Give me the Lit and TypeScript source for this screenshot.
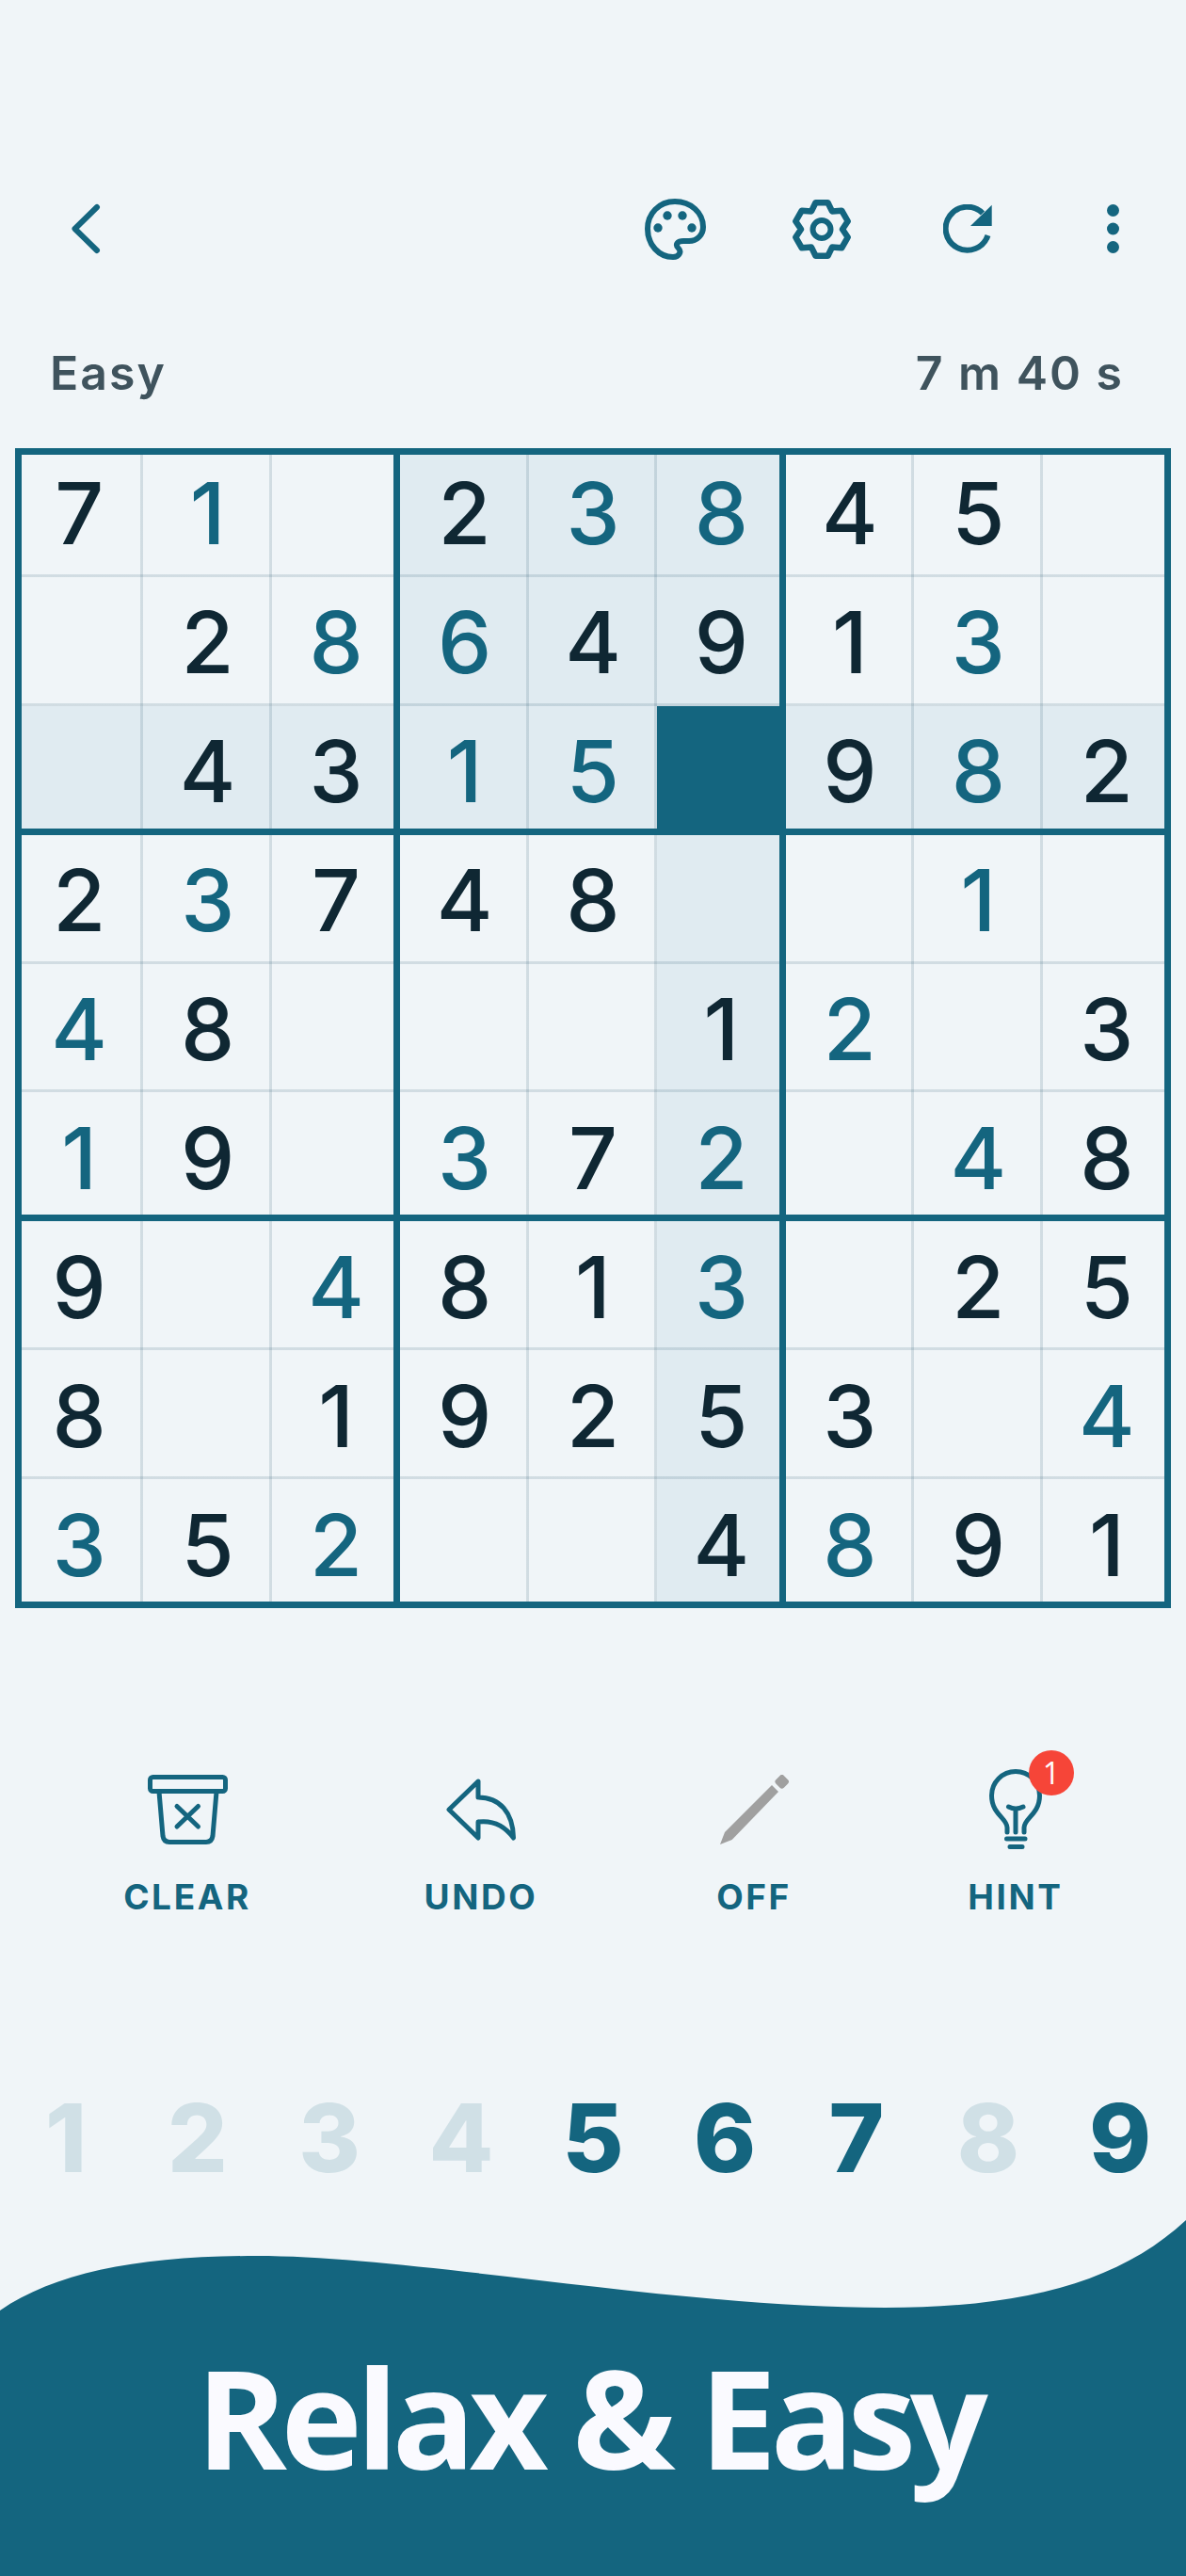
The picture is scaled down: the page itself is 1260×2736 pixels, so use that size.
import { LitElement, css, html, svg } from 'lit';
import { customElement } from 'lit/decorators.js';
import { classMap } from 'lit/directives/class-map.js';

// g = given digit (dark), u = digit filled in by the player (teal)
const BOARD = [
   ['7g', '1u', '', '2g', '3u', '8u', '4g', '5g', ''],
   ['', '2g', '8u', '6u', '4g', '9g', '1g', '3u', ''],
   ['', '4g', '3g', '1u', '5u', '', '9g', '8u', '2g'],
   ['2g', '3u', '7g', '4g', '8g', '', '', '1u', ''],
   ['4u', '8g', '', '', '', '1g', '2u', '', '3g'],
   ['1u', '9g', '', '3u', '7g', '2u', '', '4u', '8g'],
   ['9g', '', '4u', '8g', '1g', '3u', '', '2g', '5g'],
   ['8g', '', '1g', '9g', '2g', '5g', '3g', '', '4u'],
   ['3u', '5g', '2u', '', '', '4g', '8u', '9g', '1g'],
];
const SEL_ROW = 2;
const SEL_COL = 5;
const PAD_DONE = [true, true, true, true, false, false, false, true, false];

const icon = (w: number, h: number, body: unknown) => html`<svg
   width=${w}
   height=${h}
   viewBox="0 0 ${w} ${h}"
   fill="none"
   stroke="currentColor"
   stroke-linecap="round"
   stroke-linejoin="round"
>
   ${body}
</svg>`;

// six tooth gear outline around its centre
function gearPath(cx: number, cy: number, outer: number, valley: number) {
   const pt = (deg: number, r: number) => {
      const a = (deg * Math.PI) / 180;
      return `${(cx + r * Math.cos(a)).toFixed(1)} ${(cy + r * Math.sin(a)).toFixed(1)}`;
   };
   const parts: string[] = [];
   for (let k = 0; k < 6; k++) {
      const a = -90 + 60 * k;
      parts.push(pt(a - 13, outer), pt(a + 13, outer), pt(a + 30, valley));
   }
   return 'M' + parts.join('L') + 'Z';
}

@customElement('app-root')
export class AppRoot extends LitElement {
   static styles = css`
      :host {
         display: block;
         width: 1260px;
         height: 2736px;
         background: #f0f5f8;
         font-family: 'Inter', 'Liberation Sans', sans-serif;
         color: #14657f;
         overflow: hidden;
      }
      .page {
         display: flex;
         flex-direction: column;
         height: 100%;
      }

      .toolbar {
         display: flex;
         align-items: center;
         justify-content: space-between;
         height: 66px;
         margin-top: 210px;
         padding-left: 74px;
      }
      .toolbar svg {
         display: block;
      }
      .tools {
         display: grid;
         grid-template-columns: repeat(4, 155px);
         justify-items: center;
         align-items: center;
      }

      .status {
         display: flex;
         justify-content: space-between;
         margin-top: 91px;
         padding: 0 66px 0 53px;
         font-size: 50px;
         line-height: 58px;
         font-weight: 600;
         color: #3f535d;
         letter-spacing: 2px;
      }

      .board {
         display: grid;
         grid-template-columns: repeat(9, 1fr);
         grid-template-rows: repeat(9, 1fr);
         width: 1228px;
         height: 1232px;
         margin: 51px 0 0 16px;
      }
      .cell {
         --l: 0px;
         --t: 0px;
         --r: 0px;
         --b: 0px;
         display: flex;
         align-items: center;
         justify-content: center;
         box-sizing: border-box;
         padding-top: 3px;
         background-color: #f0f5f8;
         background-image: linear-gradient(rgba(20, 70, 95, 0.14), rgba(20, 70, 95, 0.14)),
            linear-gradient(rgba(20, 70, 95, 0.14), rgba(20, 70, 95, 0.14));
         background-size: 3px 100%, 100% 3px;
         background-position: right top, left bottom;
         background-repeat: no-repeat;
         box-shadow: inset var(--l) 0 0 #14657f, inset 0 var(--t) 0 #14657f,
            inset calc(var(--r) * -1) 0 0 #14657f,
            inset 0 calc(var(--b) * -1) 0 #14657f;
         font-size: 91px;
         font-weight: 500;
         line-height: 1;
         color: #0f2733;
      }
      .cell.first-col {
         --l: 7px;
      }
      .cell.first-row {
         --t: 7px;
      }
      .cell.box-right {
         --r: 7px;
      }
      .cell.box-bottom {
         --b: 7px;
      }
      .cell.user {
         color: #14657f;
      }
      .cell.peer {
         background-color: #e0ebf1;
      }
      .cell.sel {
         background-color: #14657f;
         background-image: none;
      }

      .actions {
         display: grid;
         grid-template-columns: 260px 364px 216px 340px;
         margin-top: 171px;
         padding-left: 69px;
      }
      .action {
         display: flex;
         flex-direction: column;
         align-items: center;
      }
      .glyph {
         position: relative;
         height: 86px;
         display: flex;
         align-items: center;
         justify-content: center;
      }
      .glyph svg {
         display: block;
      }
      .label {
         margin-top: 28px;
         font-size: 37px;
         line-height: 44px;
         font-weight: 700;
         letter-spacing: 2.6px;
      }
      .badge {
         position: absolute;
         top: -20px;
         left: 42px;
         width: 48px;
         height: 48px;
         border-radius: 50%;
         background: #f64538;
         color: #fff;
         font-family: 'Open Sans', sans-serif;
         font-size: 32px;
         line-height: 48px;
         text-align: center;
      }

      .pad {
         display: grid;
         grid-template-columns: repeat(9, 1fr);
         margin-top: 174px;
         font-size: 100px;
         line-height: 120px;
         font-weight: 800;
         text-align: center;
      }
      .pad span.done {
         color: #d0e0e6;
      }

      .banner {
         position: relative;
         height: 378px;
         margin-top: auto;
      }
      .banner svg {
         position: absolute;
         left: 0;
         top: 0;
         display: block;
      }
      .banner h1 {
         position: relative;
         margin: 0;
         padding: 109px 8px 0 0;
         font-family: 'Open Sans', sans-serif;
         font-size: 146px;
         line-height: 200px;
         font-weight: 700;
         letter-spacing: -6.3px;
         text-align: center;
         color: #fafaff;
      }
   `;

   renderCell(value: string, r: number, c: number) {
      const sel = r === SEL_ROW && c === SEL_COL;
      const peer =
         r === SEL_ROW ||
         c === SEL_COL ||
         (Math.floor(r / 3) === Math.floor(SEL_ROW / 3) &&
            Math.floor(c / 3) === Math.floor(SEL_COL / 3));
      return html`<div
         class=${classMap({
            cell: true,
            sel,
            peer,
            user: value.endsWith('u'),
            'first-col': c === 0,
            'first-row': r === 0,
            'box-right': c % 3 === 2,
            'box-bottom': r % 3 === 2,
         })}
      >
         ${value.charAt(0)}
      </div>`;
   }

   render() {
      return html`<div class="page">
         <div class="toolbar">
            ${icon(34, 56, svg`<path d="M29 5L5.500 28L29 51" stroke-width="6" />`)}
            <div class="tools">
               ${icon(
                  65,
                  65,
                  svg`<path d="M32 3C15 3 3 16 3 32C3 49 15 62 30 62C37 62 39 56 36 53C32 49 34 45 41 45H47C56 45 62 38 62 30C62 15 49 3 32 3Z" stroke-width="6" />
                  <g fill="currentColor" stroke="none">
                     <circle cx="14" cy="31" r="4.700" /><circle cx="24" cy="18" r="4.700" />
                     <circle cx="40" cy="18" r="4.700" /><circle cx="50" cy="31" r="4.700" />
                  </g>`
               )}
               ${icon(
                  62,
                  65,
                  svg`<path d=${gearPath(31, 32.5, 29, 22)} stroke-width="6.500" />
                  <circle cx="31" cy="32.500" r="9.500" stroke-width="6" />`
               )}
               ${icon(
                  52,
                  52,
                  svg`<path d="M47.500 33A23 23 0 1 1 42 9.500" stroke-width="6" stroke-linecap="butt" />
                  <path d="M51.700 0.700V23H29Z" fill="currentColor" stroke="none" />`
               )}
               ${icon(
                  13,
                  52,
                  svg`<g fill="currentColor" stroke="none">
                     <circle cx="6.500" cy="6.500" r="6.500" /><circle cx="6.500" cy="26" r="6.500" /><circle cx="6.500" cy="45.500" r="6.500" />
                  </g>`
               )}
            </div>
         </div>

         <div class="status"><span>Easy</span><span>7 m 40 s</span></div>

         <div class="board">
            ${BOARD.map((row, r) => row.map((v, c) => this.renderCell(v, r, c)))}
         </div>

         <div class="actions">
            <div class="action">
               <div class="glyph">
                  ${icon(
                     85,
                     74,
                     svg`<rect x="2.500" y="2.500" width="80" height="15" rx="3" stroke-width="5" />
                     <path d="M12 18L16 65Q17 71.500 23 71.500H62Q68 71.500 69 65L73 18" stroke-width="5" />
                     <path d="M31 33.500L53.500 55M53.500 33.500L31 55" stroke-width="5" />`
                  )}
               </div>
               <div class="label">CLEAR</div>
            </div>
            <div class="action">
               <div class="glyph">
                  ${icon(
                     74,
                     66,
                     svg`<path d="M34 3L3 33L34 63V46C50 44 62 50 71.500 63C71 36 57 20 34 20Z" stroke-width="5" />`
                  )}
               </div>
               <div class="label">UNDO</div>
            </div>
            <div class="action">
               <div class="glyph">
                  ${icon(
                     75,
                     74,
                     svg`<g fill="#a0a0a0" stroke="none">
                        <path d="M56 11L63 18L13.700 69L1 74L6 61Z" />
                        <rect x="60.700" y="1.300" width="12" height="12" rx="3" transform="rotate(45 66.700 7.300)" />
                     </g>`
                  )}
               </div>
               <div class="label">OFF</div>
            </div>
            <div class="action">
               <div class="glyph">
                  ${icon(
                     56,
                     86,
                     svg`<path d="M19 67V62C19 52 2.500 48 2.500 28A25.500 25.500 0 0 1 53.500 28C53.500 48 37 52 37 62V67" stroke-width="5" />
                     <path d="M20.500 40Q28 44 36 40M28 43V67M18.500 74H38M22 82.500H35" stroke-width="5" />`
                  )}
                  <div class="badge">1</div>
               </div>
               <div class="label">HINT</div>
            </div>
         </div>

         <div class="pad">
            ${PAD_DONE.map(
               (done, i) => html`<span class=${done ? 'done' : ''}>${i + 1}</span>`
            )}
         </div>

         <div class="banner">
            <svg width="1260" height="378" viewBox="0 0 1260 378">
               <path
                  fill="#14657f"
                  d="M0 96C60 55 150 38 273 38C440 38 720 93 940 93C1090 93 1190 65 1260 0V378H0Z"
               />
            </svg>
            <h1>Relax &amp; Easy</h1>
         </div>
      </div>`;
   }
}
